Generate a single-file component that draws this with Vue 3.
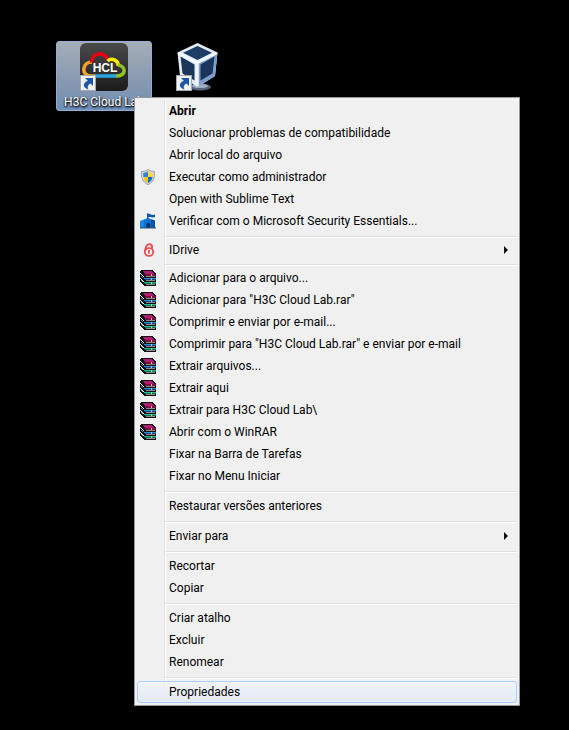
<script setup>
import { ref } from 'vue';

const selected = ref('Propriedades');

const groups = [
  [
    { label: 'Abrir', bold: true },
    { label: 'Solucionar problemas de compatibilidade' },
    { label: 'Abrir local do arquivo' },
    { label: 'Executar como administrador', icon: 'shield' },
    { label: 'Open with Sublime Text' },
    { label: 'Verificar com o Microsoft Security Essentials...', icon: 'castle' },
  ],
  [{ label: 'IDrive', icon: 'idrive', submenu: true }],
  [
    { label: 'Adicionar para o arquivo...', icon: 'rar' },
    { label: 'Adicionar para "H3C Cloud Lab.rar"', icon: 'rar' },
    { label: 'Comprimir e enviar por e-mail...', icon: 'rar' },
    { label: 'Comprimir para "H3C Cloud Lab.rar" e enviar por e-mail', icon: 'rar' },
    { label: 'Extrair arquivos...', icon: 'rar' },
    { label: 'Extrair aqui', icon: 'rar' },
    { label: 'Extrair para H3C Cloud Lab\\', icon: 'rar' },
    { label: 'Abrir com o WinRAR', icon: 'rar' },
    { label: 'Fixar na Barra de Tarefas' },
    { label: 'Fixar no Menu Iniciar' },
  ],
  [{ label: 'Restaurar versões anteriores' }],
  [{ label: 'Enviar para', submenu: true }],
  [{ label: 'Recortar' }, { label: 'Copiar' }],
  [{ label: 'Criar atalho' }, { label: 'Excluir' }, { label: 'Renomear' }],
  [{ label: 'Propriedades' }],
];
</script>

<template>
  <main class="desktop">
    <div class="shortcuts">
      <button class="shortcut active" type="button">
        <svg class="app-icon" viewBox="0 0 48 48">
          <defs>
            <linearGradient id="tile" x1="0" y1="0" x2="0" y2="1">
              <stop offset="0" stop-color="#4a4a4a" />
              <stop offset="1" stop-color="#1b1b1b" />
            </linearGradient>
          </defs>
          <rect width="48" height="48" rx="6" fill="url(#tile)" />
          <g fill="none" stroke-width="3.6">
            <path d="M15 33 H36" stroke="#2ea3df" />
            <path d="M12 19 C2 19 1 32 10 33 H15" stroke="#f5a32b" />
            <path d="M11.500 19.500 C12 9 24 8 28 17" stroke="#e60012" />
            <path d="M27.500 18 C32 14 39 18 38 23" stroke="#ffec00" />
            <path d="M38 22 C46 23 47 33 36 33" stroke="#8fc31f" />
          </g>
          <text class="hcl" x="25" y="29" text-anchor="middle">HCL</text>
          <g>
            <rect x="0.500" y="32.500" width="15" height="15" fill="#eef0f2" stroke="#a4a9ad" />
            <path d="M5 35 H13 V43 L10.500 40.500 C8 41.500 7 44 8.500 46.500 C3 45 2 40.500 7.800 37.800 Z" fill="#1c56a5" />
          </g>
        </svg>
        <span class="caption">H3C Cloud Lab</span>
      </button>
      <button class="shortcut" type="button" aria-label="VirtualBox">
        <svg class="app-icon" viewBox="0 0 48 48">
          <ellipse cx="28" cy="44" rx="11" ry="3.500" fill="#56657d" />
          <ellipse cx="28" cy="43" rx="8" ry="2" fill="#9fb0c9" />
          <path d="M25.500 0 L45.500 9.500 L43 33 L25.500 44 L8 33 L5.500 9.500 Z" fill="#e3ecf8" />
          <path d="M45.500 9.500 L43 33 L25.500 44 V20 Z" fill="#7f9dcb" />
          <path d="M25.500 3 L40 9.800 L25.500 17 L11 9.800 Z" fill="#1d3c66" />
          <path d="M8.500 13.500 L22.500 21.500 V37.500 L10.500 30.500 Z" fill="#1b3658" />
          <path d="M42.500 13.500 L28.500 21.500 V37.500 L40.500 30.500 Z" fill="#1a345a" />
          <path d="M6 10 L25.500 20 L45 10 M25.500 20 V43" fill="none" stroke="#f4f8ff" stroke-width="2.400" />
          <g>
            <rect x="4.500" y="32.500" width="15" height="15" fill="#eef0f2" stroke="#a4a9ad" />
            <path d="M9 35 H17 V43 L14.500 40.500 C12 41.500 11 44 12.500 46.500 C7 45 6 40.500 11.800 37.800 Z" fill="#1c56a5" />
          </g>
        </svg>
      </button>
    </div>

    <nav class="menu">
      <ul v-for="(group, index) in groups" :key="index" class="group" :class="{ tight: index === 1 }">
        <li v-for="item in group" :key="item.label">
          <button
            type="button"
            class="item"
            :class="{ bold: item.bold, hover: item.label === selected }"
            @mouseenter="selected = item.label"
          >
            <span class="gutter">
              <svg v-if="item.icon === 'shield'" viewBox="0 0 16 16">
                <path d="M8 0.500 C6 2 3.500 2.500 1.500 2.500 C1 8 2 13 8 15.700 C14 13 15 8 14.500 2.500 C12.500 2.500 10 2 8 0.500 Z" fill="#d3d6d8" stroke="#8c9298" stroke-width="0.800" />
                <path d="M8 2.500 C6.500 3.400 5 3.900 3.300 4 C3.200 5.500 3.200 6.800 3.500 8 H8 Z" fill="#2d83d8" />
                <path d="M8 2.500 C9.500 3.400 11 3.900 12.700 4 C12.800 5.500 12.800 6.800 12.500 8 H8 Z" fill="#ffd92e" />
                <path d="M3.500 8 H8 V14 C5.500 12.700 4 11 3.500 8 Z" fill="#fbc712" />
                <path d="M12.500 8 H8 V14 C10.500 12.700 12 11 12.500 8 Z" fill="#1769c5" />
              </svg>
              <svg v-else-if="item.icon === 'castle'" viewBox="0 0 16 16">
                <path d="M7 0.500 C9 -0.500 10 3 15 1.500 V4 C12 5 11 4 8.500 4 V6 H7 Z" fill="#1458a5" />
                <path d="M0 8 L5 6 V15 H0 Z" fill="#1688e8" />
                <path d="M4 7 L8 4.500 L12 7 V15 H4 Z" fill="#0870d2" />
                <path d="M11 6 L15 7.500 V15 H11 Z" fill="#0754a7" />
                <path d="M6.500 15 V11.500 C6.500 9 10 9 10 11.500 V15 Z" fill="#092f62" />
                <path d="M0 15 H16" stroke="#334d68" />
              </svg>
              <svg v-else-if="item.icon === 'idrive'" viewBox="0 0 16 16">
                <rect x="3" y="1" width="12" height="14" fill="#e4edf4" />
                <g fill="none" stroke="#ee4545" stroke-width="1.700">
                  <ellipse cx="9" cy="10" rx="4.200" ry="4" />
                  <path d="M5 8.500 C5.500 4 8 1.500 10.500 2.300 C12 3 12.500 4.500 11.800 7" />
                  <path d="M9.300 8 L8.700 11.500" />
                </g>
              </svg>
              <svg v-else-if="item.icon === 'rar'" viewBox="0 0 16 16" shape-rendering="crispEdges">
                <path d="M1 0 H12 L16 3 V16 H5 L0 12 V1 Z" fill="#111" />
                <path d="M2 1 H11 L15 4 H5 Z" fill="#b31c76" />
                <path d="M5 4 H16 V6 H5 Z" fill="#7c0a4c" />
                <path d="M0 3 L4 6 V7 L0 4 Z M0 8 L4 11 V12 L0 9 Z M0 12 L4 15 V16 L0 13 Z" fill="#f4f4f4" />
                <path d="M1 6 L4 8 H16 V9 H5 L1 7 Z" fill="#2b8fe6" />
                <path d="M5 9 H16 V10 H5 Z" fill="#123f94" />
                <path d="M1 10 L4 12 H16 V13 H5 L1 11 Z" fill="#25bf98" />
                <path d="M5 13 H16 V14 H5 Z" fill="#086b54" />
                <path d="M6 6 H15 V7 H6 Z M6 10 H15 V11 H6 Z M6 14 H15 V15 H6 Z" fill="#8c8c8c" />
                <path d="M11 4 H12 V6 H11 Z M11 8 H12 V10 H11 Z M11 12 H12 V14 H11 Z" fill="#d8c14c" />
              </svg>
            </span>
            <span class="label">{{ item.label }}</span>
            <svg v-if="item.submenu" class="arrow" viewBox="0 0 4 8">
              <path d="M0 0 L4 4 L0 8 Z" fill="#111" />
            </svg>
          </button>
        </li>
      </ul>
    </nav>
  </main>
</template>

<style>
body {
  margin: 0;
  background: #000;
}
</style>

<style scoped>
.desktop {
  position: relative;
  min-height: 100vh;
  box-sizing: border-box;
  padding: 41px 0 0 56px;
  background: #000;
  font-family: Roboto, "Open Sans", sans-serif;
  font-size: 12px;
}

.shortcuts {
  display: flex;
}

.shortcut {
  display: flex;
  flex-direction: column;
  align-items: center;
  width: 88px;
  height: 70px;
  padding: 1px;
  border: 1px solid transparent;
  border-radius: 3px;
  background: none;
  color: #fff;
  font: inherit;
}

.shortcut.active {
  width: 96px;
  border-color: #8fb0d4;
  background: linear-gradient(#a5adb8, #8296b0 70%, #6f91ba);
}

.app-icon {
  width: 48px;
  height: 48px;
  flex: none;
}

.hcl {
  fill: #fff;
  font-family: "Liberation Sans", sans-serif;
  font-size: 12px;
  font-weight: bold;
}

.caption {
  margin-top: 2px;
  line-height: 18px;
  white-space: nowrap;
  text-shadow: 0 1px 2px #000, 1px 1px 2px #000;
}

.menu {
  position: absolute;
  top: 97px;
  left: 134px;
  box-sizing: border-box;
  min-width: 386px;
  padding: 2px;
  border: 1px solid #979797;
  background: #f0f0f0;
}

.group {
  margin: 0;
  padding: 0;
  list-style: none;
  background: linear-gradient(90deg, #e2e3e3 50%, #fff 50%) 27px 0 / 2px 100% no-repeat;
}

/* the divider starts right after the icon gutter */
.group + .group::before {
  content: "";
  display: block;
  height: 1px;
  margin-left: 28px;
  border-top: 1px solid #e0e0e0;
  background: #fff;
}

.group + .group {
  padding-top: 4px;
}

.group + .group li:first-child {
  margin-top: 2px;
}

.group.tight::before,
.group.tight + .group::before {
  margin-bottom: -1px;
}

.item {
  display: flex;
  align-items: center;
  box-sizing: border-box;
  width: 100%;
  height: 22px;
  padding: 0 8px 0 0;
  border: 1px solid transparent;
  border-radius: 3px;
  background: none;
  color: #000;
  font: inherit;
  line-height: 20px;
  text-align: left;
}

.tight .item {
  height: 21px;
}

.item.bold {
  font-weight: bold;
}

.item.hover {
  border-color: #aecff7;
  background: linear-gradient(rgba(241, 245, 251, 0.8), rgba(225, 232, 245, 0.8));
}

.gutter {
  flex: none;
  display: flex;
  width: 29px;
  padding-left: 2px;
}

.gutter svg {
  width: 16px;
  height: 16px;
}

.label {
  flex: 1;
  white-space: nowrap;
}

.arrow {
  width: 4px;
  height: 8px;
}
</style>
